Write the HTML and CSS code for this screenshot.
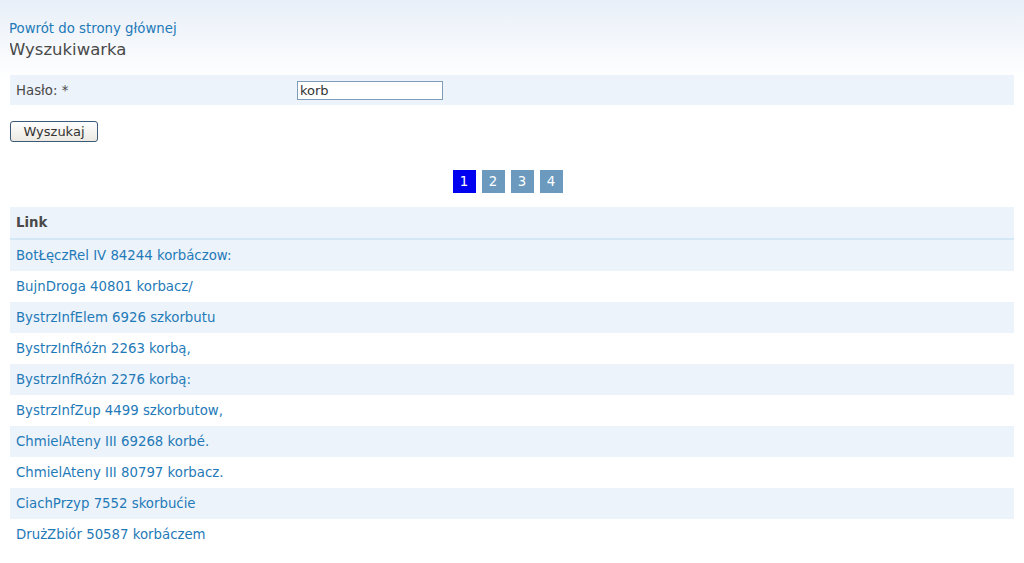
FILE: index.html
```html
<!DOCTYPE html>
<html lang="pl">

<head>
    <meta charset="UTF-8">
    <title>Wyszukiwarka</title>
    <link rel="stylesheet" href="styles.css">
</head>

<body>
    <div class="top">
        <a href="#" class="powrot">Powrót do strony głównej</a>
        <h1>Wyszukiwarka</h1>
    </div>

    <form class="szukaj">
        <div class="pole">
            <label for="haslo">Hasło: *</label>
            <input type="text" id="haslo" value="korb">
        </div>
        <button type="button" class="btn">Wyszukaj</button>
    </form>

    <div class="pager">
        <a href="#" class="strona aktywna">1</a>
        <a href="#" class="strona">2</a>
        <a href="#" class="strona">3</a>
        <a href="#" class="strona">4</a>
    </div>

    <table class="wyniki">
        <thead>
            <tr>
                <th>Link</th>
            </tr>
        </thead>
        <tbody>
            <tr><td><a href="#">BotŁęczRel IV 84244 korbáczow:</a></td></tr>
            <tr><td><a href="#">BujnDroga 40801 korbacz/</a></td></tr>
            <tr><td><a href="#">BystrzInfElem 6926 szkorbutu</a></td></tr>
            <tr><td><a href="#">BystrzInfRóżn 2263 korbą,</a></td></tr>
            <tr><td><a href="#">BystrzInfRóżn 2276 korbą:</a></td></tr>
            <tr><td><a href="#">BystrzInfZup 4499 szkorbutow,</a></td></tr>
            <tr><td><a href="#">ChmielAteny III 69268 korbé.</a></td></tr>
            <tr><td><a href="#">ChmielAteny III 80797 korbacz.</a></td></tr>
            <tr><td><a href="#">CiachPrzyp 7552 skorbućie</a></td></tr>
            <tr><td><a href="#">DrużZbiór 50587 korbáczem</a></td></tr>
        </tbody>
    </table>
</body>

</html>
```

FILE: styles.css
```css
html {
    background: linear-gradient(#e8eff8 0px, #ffffff 80px) no-repeat;
    background-color: white;
}

body {
    margin: 0 10px;
    font-family: "DejaVu Sans", Verdana, sans-serif;
    font-size: 13.3px;
    color: #494949;
}

a {
    color: #1f7ab8;
    text-decoration: none;
}

.top {
    padding-top: 20px;
}

.powrot {
    display: block;
    margin-left: -1px;
    line-height: 18px;
}

h1 {
    margin: 0;
    font-size: 16.5px;
    font-weight: normal;
    line-height: 24px;
    margin-left: -1px;
}

.szukaj {
    margin-top: 13px;
}

.pole {
    display: flex;
    align-items: center;
    height: 30px;
    background-color: #edf3fa;
    padding-left: 6px;
}

.pole label {
    width: 281px;
}

.pole input {
    width: 140px;
    height: 15px;
    padding: 1px 2px;
    border: 1px solid #7f9db9;
    font-family: inherit;
    font-size: 13px;
    color: #333;
}

.btn {
    margin-top: 16px;
    width: 88px;
    height: 21px;
    padding: 0;
    font-family: inherit;
    font-size: 13px;
    color: #333;
    background: linear-gradient(#ffffff, #ece9e2);
    border: 1px solid #3c5a78;
    border-radius: 3px;
}

.pager {
    display: flex;
    justify-content: center;
    gap: 6px;
    margin-top: 28px;
    padding-right: 9px;
}

.strona {
    width: 23px;
    height: 23px;
    line-height: 23px;
    text-align: center;
    color: white;
    background-color: #6b9abe;
}

.strona.aktywna {
    background-color: #0000f0;
}

.wyniki {
    width: 100%;
    margin-top: 14px;
    border-collapse: collapse;
}

.wyniki th {
    text-align: left;
    height: 31px;
    padding: 0 6px;
    background-color: #edf3fa;
    border-bottom: 2px solid #d3e7f4;
}

.wyniki td {
    height: 31px;
    padding: 0 6px;
}

.wyniki tbody tr:nth-child(odd) {
    background-color: #edf3fa;
}
```
